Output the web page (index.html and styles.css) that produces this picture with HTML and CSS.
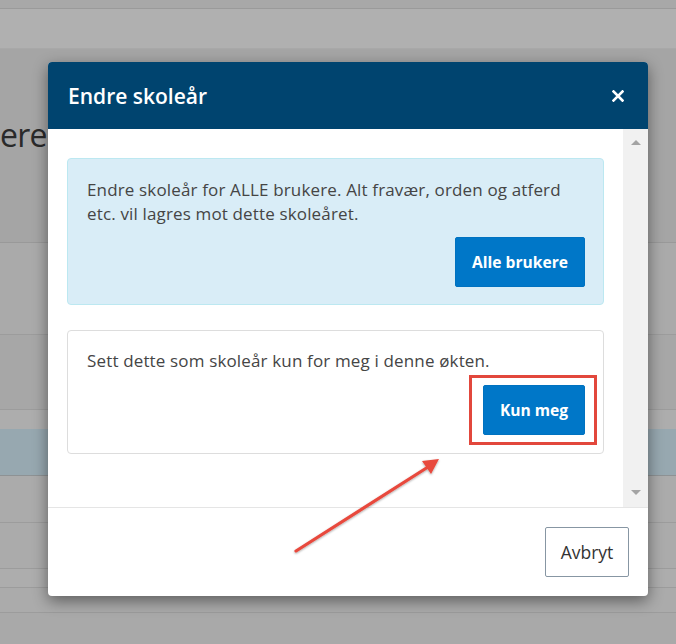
FILE: index.html
```html
<!DOCTYPE html>
<html lang="no">
<head>
<meta charset="utf-8">
<title>Endre skoleår</title>
<link rel="stylesheet" href="styles.css">
</head>
<body>
<div class="page">
  <div class="topbar"></div>
  <div class="band"></div>
  <div class="hero">
    <div class="hero-title"><span>ere</span></div>
  </div>
  <div class="row r1"></div>
  <div class="row r2"></div>
  <div class="row r3"></div>
  <div class="row r4 selected"></div>
  <div class="row r5"></div>
  <div class="row r6"></div>
  <div class="row r7"></div>
  <div class="row r8"></div>
  <div class="rest"></div>
</div>

<div class="modal">
  <div class="modal-header">
    <h4 class="modal-title">Endre skoleår</h4>
    <span class="close" aria-label="Lukk">
      <svg width="12" height="12" viewBox="0 0 12 12"><path d="M1.5 1.5 L10.5 10.5 M10.5 1.5 L1.5 10.5" stroke="#ffffff" stroke-width="2.6" stroke-linecap="square" fill="none"/></svg>
    </span>
  </div>
  <div class="modal-body">
    <div class="modal-content">
      <div class="alert">
        <p class="text">Endre skoleår for ALLE brukere. Alt fravær, orden og atferd etc. vil lagres mot dette skoleåret.</p>
        <div class="actions"><button class="btn btn-primary">Alle brukere</button></div>
      </div>
      <div class="panel">
        <p class="text">Sett dette som skoleår kun for meg i denne økten.</p>
        <div class="actions">
          <span class="highlight-wrap">
            <button class="btn btn-primary btn-kun">Kun meg</button>
            <span class="highlight"></span>
          </span>
        </div>
      </div>
    </div>
    <div class="scrollbar">
      <span class="arrow-up"></span>
      <span class="arrow-down"></span>
    </div>
  </div>
  <div class="modal-footer">
    <button class="btn btn-default">Avbryt</button>
  </div>
</div>

<svg class="annotation" width="676" height="644" viewBox="0 0 676 644">
  <defs>
    <filter id="sh" x="-10%" y="-10%" width="120%" height="120%">
      <feDropShadow dx="0" dy="1" stdDeviation="0.8" flood-color="#000" flood-opacity="0.35"/>
    </filter>
  </defs>
  <g filter="url(#sh)">
    <line x1="296" y1="551" x2="428" y2="467" stroke="#e8483c" stroke-width="3.2" stroke-linecap="round"/>
    <polygon points="439,459 431,474 422,461" fill="#e8483c"/>
  </g>
</svg>
</body>
</html>
```

FILE: styles.css
```css
* { box-sizing: border-box; }

html, body {
  margin: 0;
  padding: 0;
}

body {
  width: 676px;
  height: 644px;
  overflow: hidden;
  background: #a9a9a9;
  font-family: "Open Sans", "Noto Sans", sans-serif;
  position: relative;
}

.page {
  display: flex;
  flex-direction: column;
  height: 644px;
}

.topbar {
  height: 9px;
  background: #a8a8a8;
  border-bottom: 1px solid #9a9a9a;
}

.band {
  height: 40px;
  background: #b0b0b0;
  border-bottom: 1px solid #a8a8a8;
}

.hero {
  height: 194px;
  background: #a5a5a5;
  border-bottom: 1px solid #999999;
  padding-top: 63px;
}

.hero-title {
  width: 46px;
  display: flex;
  justify-content: flex-start;
  white-space: nowrap;
  font-size: 32px;
  line-height: 46px;
  color: #2a2a2a;
  letter-spacing: -0.8px;
}

.row {
  border-bottom: 1px solid #9c9c9c;
}

.r1 { height: 92px; background: #aaaaaa; }
.r2 { height: 75px; background: #a7a7a7; }
.r3 { height: 19px; background: #adadad; border-bottom: 0; }
.r4 { height: 47px; background: #97a8b0; border-bottom-color: #8e9294; }
.r5 { height: 47px; background: #ababab; }
.r6 { height: 46px; background: #ababab; }
.r7 { height: 19px; background: #adadad; }
.r8 { height: 25px; background: #ababab; }
.rest { flex: 1; background: #a9a9a9; }

/* Modal */
.modal {
  position: absolute;
  left: 48px;
  top: 62px;
  width: 600px;
  background: #ffffff;
  border-radius: 4px;
  box-shadow: 0 5px 15px rgba(0, 0, 0, 0.45);
  overflow: hidden;
  display: flex;
  flex-direction: column;
}

.modal-header {
  height: 67px;
  background: #00446f;
  display: flex;
  align-items: center;
  justify-content: space-between;
  padding: 0 24px 0 20px;
}

.modal-title {
  margin: 0;
  color: #ffffff;
  font-size: 21px;
  font-weight: 600;
  line-height: 28px;
}

.close {
  display: flex;
  align-items: center;
  width: 12px;
  height: 12px;
  margin-top: 1px;
}

.close svg {
  display: block;
}

.modal-body {
  height: 378px;
  display: flex;
}

.modal-content {
  flex: 1;
  padding: 29px 19px 0 19px;
}

.scrollbar {
  width: 25px;
  background: #f1f1f1;
  position: relative;
}

.arrow-up,
.arrow-down {
  position: absolute;
  left: 8px;
  width: 0;
  height: 0;
  border-left: 5px solid transparent;
  border-right: 5px solid transparent;
}

.arrow-up {
  top: 11px;
  border-bottom: 5px solid #a3a3a3;
}

.arrow-down {
  bottom: 12px;
  border-top: 5px solid #a3a3a3;
}

.text {
  margin: 0;
  font-size: 17px;
  letter-spacing: 0.15px;
  line-height: 24px;
  color: #454545;
}

.alert {
  background: #d9edf7;
  border: 1px solid #bce8f1;
  border-radius: 4px;
  padding: 19px 18px 17px 19px;
}

.alert .actions {
  margin-top: 11px;
}

.panel {
  margin-top: 25px;
  border: 1px solid #dddddd;
  border-radius: 4px;
  padding: 18px 18px 18px 19px;
}

.panel .actions {
  margin-top: 12px;
}

.actions {
  display: flex;
  justify-content: flex-end;
}

.btn {
  font-family: "Open Sans", "Noto Sans", sans-serif;
  height: 50px;
  border-radius: 2px;
  cursor: pointer;
  margin: 0;
}

.btn-primary {
  background: #0077c8;
  border: 1px solid #0072c0;
  color: #ffffff;
  font-size: 15.6px;
  font-weight: 700;
  padding: 0 10px;
}

.alert .btn-primary {
  width: 130px;
}

.btn-kun {
  width: 102px;
}

.highlight-wrap {
  position: relative;
  display: inline-block;
}

.highlight {
  position: absolute;
  left: -14px;
  right: -12px;
  top: -10px;
  bottom: -10px;
  border: 3px solid #e2473c;
}

.modal-footer {
  height: 89px;
  border-top: 1px solid #e5e5e5;
  padding: 19px 19px 0 19px;
  display: flex;
  justify-content: flex-end;
  align-items: flex-start;
}

.btn-default {
  width: 84px;
  background: #ffffff;
  border: 1px solid #8796a3;
  color: #333333;
  font-size: 17.5px;
  font-weight: 400;
  padding: 0 8px;
}

.annotation {
  position: absolute;
  left: 0;
  top: 0;
  pointer-events: none;
}
```
